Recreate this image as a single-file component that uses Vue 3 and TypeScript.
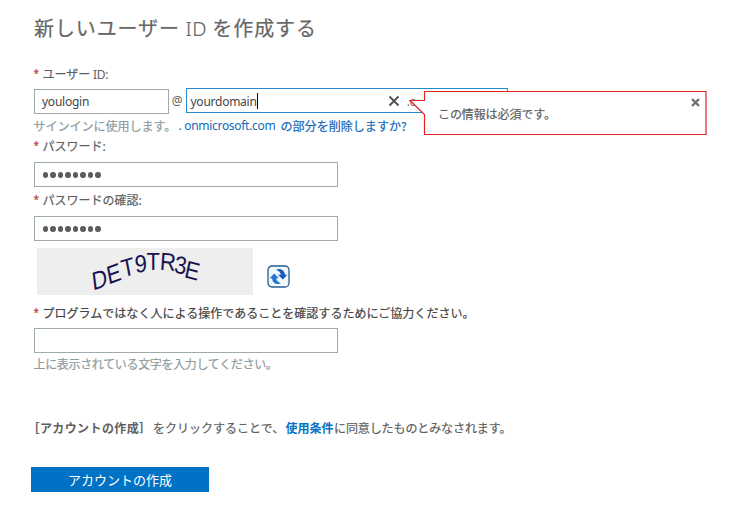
<script setup lang="ts">
import { ref } from 'vue'

interface Glyph { ch: string; x: number; y: number; angle: number; skew: number }

const login = ref('youlogin')
const domain = ref('yourdomain')
const dots = Array.from({ length: 8 }, (_, i) => i)
const captcha: Glyph[] = [
  { ch: 'D', x: 56, y: 42.5, angle: -18, skew: -22 },
  { ch: 'E', x: 71.5, y: 36.5, angle: -20, skew: -18 },
  { ch: 'T', x: 86, y: 29.5, angle: -16, skew: -10 },
  { ch: '9', x: 98.5, y: 25, angle: -8, skew: -6 },
  { ch: 'T', x: 109.5, y: 22, angle: 0, skew: 0 },
  { ch: 'R', x: 122.5, y: 21.5, angle: 6, skew: 4 },
  { ch: '3', x: 136.5, y: 24.5, angle: 10, skew: 4 },
  { ch: 'E', x: 146.5, y: 29, angle: 15, skew: 6 },
]
</script>

<template>
  <main class="page">
    <h1 class="title">新しいユーザー<span class="latin"> ID </span>を作成する</h1>

    <form class="form" @submit.prevent>
      <div class="label user-label"><i>*</i><span>ユーザー <b class="latin">ID:</b></span></div>
      <div class="row">
        <div class="field login">{{ login }}</div>
        <span class="at">@</span>
        <div class="field domain">
          <span>{{ domain }}</span><span class="caret"></span>
          <svg class="clear" width="12" height="12" viewBox="0 0 12 12"><path d="M1.5 1.5 L10.5 10.5 M10.5 1.5 L1.5 10.5" /></svg>
          <span class="suffix">.o</span>
        </div>
        <div class="tip">
          <svg class="bubble" width="300" height="46" viewBox="0 0 300 46">
            <path d="M16.5 1.5 H298 V44.5 H16.5 V24.5 L2 10.5 H16.5 Z" />
          </svg>
          <span class="message">この情報は必須です。</span>
          <svg class="dismiss" width="9" height="9" viewBox="0 0 9 9"><path d="M1 1 L8 8 M8 1 L1 8" /></svg>
        </div>
      </div>
      <div class="hint first"><span class="signin">サインインに使用します。</span><a><span class="latin">. onmicrosoft.com</span><span class="remove">の部分を削除しますか?</span></a></div>

      <div class="label password-label"><i>*</i><span>パスワード<em>:</em></span></div>
      <div class="field wide"><span class="dots"><span v-for="n in dots" :key="n" class="dot"></span></span></div>
      <div class="label confirm-label"><i>*</i><span>パスワードの確認<em>:</em></span></div>
      <div class="field wide"><span class="dots"><span v-for="n in dots" :key="n" class="dot"></span></span></div>

      <div class="challenge">
        <svg class="captcha" width="216" height="47" viewBox="0 0 216 47">
          <text v-for="(g, i) in captcha" :key="i" :transform="`translate(${g.x} ${g.y}) rotate(${g.angle}) skewX(${-g.skew * -0.5}) scale(1 1.12)`">{{ g.ch }}</text>
        </svg>
        <svg class="refresh" width="23" height="23" viewBox="0 0 23 23">
          <rect x="1" y="1" width="21" height="21" rx="4" fill="#f3f8fb" stroke="#265c91" stroke-width="1.3" />
          <path d="M9 4.8 C13 2.6 17.6 5 18 9.8 H20.4 L15.8 14.6 L11 9.8 H13.8 C13.6 7.6 12 5.8 9 4.8 Z" fill="#185bc0" />
          <path d="M14 18.2 C10 20.4 5.4 18 5 13.2 H2.6 L7.2 8.4 L12 13.2 H9.2 C9.4 15.4 11 17.2 14 18.2 Z" fill="#2777d2" />
        </svg>
      </div>

      <div class="label human-label"><i>*</i><span>プログラムではなく人による操作であることを確認するためにご協力ください。</span></div>
      <div class="field wide"></div>
      <div class="hint last">上に表示されている文字を入力してください。</div>

      <p class="terms"><strong>［アカウントの作成］</strong><span class="click">をクリックすることで、</span><a>使用条件</a><span class="agree">に同意したものとみなされます。</span></p>
      <button class="submit" type="submit">アカウントの作成</button>
    </form>
  </main>
</template>

<style>
body { background: #fff; }
</style>

<style scoped>
.page { box-sizing: border-box; width: 735px; height: 528px; padding: 13px 0 0 33.5px; overflow: hidden; font: 12px/20px "Noto Sans CJK JP", sans-serif; color: #606060; -webkit-text-stroke: .2px; }
.title { margin: 0; height: 51px; padding-left: .5px; font-size: 20px; line-height: 30px; font-weight: 400; letter-spacing: .9px; color: #666; white-space: pre; }
.latin { font-family: "Noto Sans", sans-serif; font-weight: 400; -webkit-text-stroke: 0; }
.title .latin { font-weight: 300; letter-spacing: .4px; -webkit-text-stroke: .2px; }
.form { display: flex; flex-direction: column; align-items: flex-start; }
.label { display: flex; white-space: nowrap; }
.label i { width: 9px; flex: none; font: 10px/18px "Noto Sans", sans-serif; color: #b83a3a; }
.label em { font-style: normal; font-family: "Noto Sans", sans-serif; }
.user-label { height: 24px; }
.user-label .latin { letter-spacing: -.3px; }
.row { display: flex; height: 27px; }
.field { box-sizing: border-box; height: 25px; border: 1px solid #a0acac; background: #fff; padding-left: 7.5px; font: 12px/23px "Noto Sans", sans-serif; letter-spacing: -.25px; color: #444; -webkit-text-stroke: 0; }
.login { width: 135px; margin-top: 1px; }
.at { width: 17.5px; text-align: center; font: 12px/26px "Noto Sans", sans-serif; -webkit-text-stroke: 0; }
.domain { display: flex; align-items: center; width: 321.5px; border-color: #278bd0; padding-left: 3.5px; overflow: hidden; }
.domain > span { padding-top: 1px; }
.domain .caret { width: 1px; height: 16px; padding: 0; background: #000; }
.clear { margin-left: 130px; fill: none; stroke: #505050; stroke-width: 1.8; }
.suffix { margin-left: 7px; color: #777; }
.tip { position: relative; width: 0; }
.bubble { position: absolute; left: -100px; top: 2px; fill: #fff; stroke: #e52222; stroke-width: 1.2; }
.message { position: absolute; left: -69.5px; top: 16px; white-space: nowrap; letter-spacing: -.1px; }
.dismiss { position: absolute; left: 183px; top: 9.5px; stroke: #707070; stroke-width: 2.4; }
.hint { white-space: nowrap; color: #8f9a9d; }
.first { display: flex; height: 21px; padding-top: .5px; box-sizing: border-box; }
.signin { width: 145px; }
a { color: #1468b8; text-decoration: none; }
.first a { display: flex; }
.first .latin { width: 102px; letter-spacing: -.3px; }
.remove { letter-spacing: .05px; }
.password-label { height: 26px; }
.wide { width: 304.4px; }
.dots { display: flex; gap: 2px; padding-top: 9px; padding-left: .5px; }
.dot { width: 5.5px; height: 6px; border-radius: 50%; background: #5c5c5c; }
.confirm-label { padding-top: 3px; height: 26px; }
.challenge { display: flex; height: 55px; padding: 7px 0 0 3px; box-sizing: border-box; }
.captcha { background: #eee; }
.captcha text { font: 22px "Liberation Sans", sans-serif; fill: #171451; stroke: none; -webkit-text-stroke: 0; }
.refresh { margin: 17px 0 0 14.5px; }
.human-label { padding-top: 7px; height: 25px; color: #444; }
.human-label span { letter-spacing: .03px; }
.last { height: 64px; padding-top: 1px; letter-spacing: -.33px; }
.terms { display: flex; margin: 0; height: 49px; white-space: nowrap; }
.terms strong { margin-left: -6px; width: 125.5px; letter-spacing: .4px; -webkit-text-stroke: 0; }
.click { width: 132.5px; }
.terms a { width: 48.5px; font-weight: 700; color: #0672c6; -webkit-text-stroke: 0; }
.agree { letter-spacing: -.1px; }
.submit { width: 178.8px; height: 25px; margin-left: -3px; padding: 0; border: 0; background: #0072c6; color: #fff; font: 13px/25px "Noto Sans CJK JP", sans-serif; -webkit-text-stroke: 0; }
</style>
